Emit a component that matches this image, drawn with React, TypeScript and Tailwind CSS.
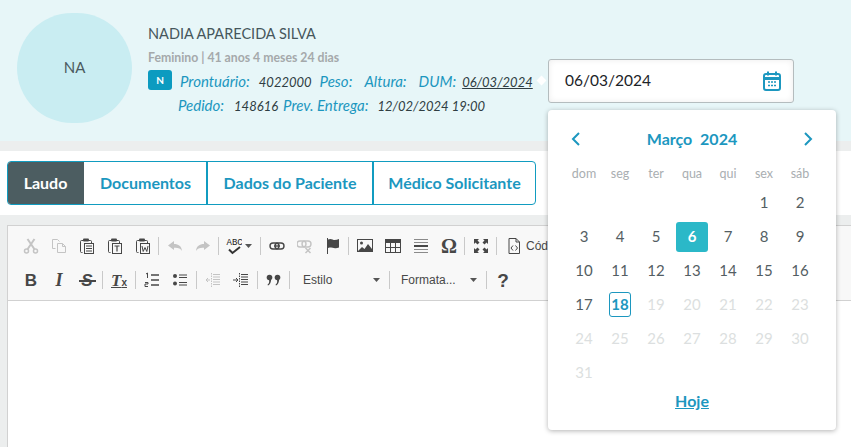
import React from "react";

const F = "[font-family:'Lato','Noto_Sans',sans-serif]";

function Sv({ children, w = 16, h = 16 }: { children: React.ReactNode; w?: number; h?: number }) {
  return (
    <svg width={w} height={h} viewBox={`0 0 ${w} ${h}`} fill="none">
      {children}
    </svg>
  );
}
const D = "#474747";
const L = "#c4c4c4";

const Scissors = () => (
  <Sv>
    <circle cx="3.500" cy="13" r="2" stroke={L} strokeWidth="1.500" />
    <circle cx="12.500" cy="13" r="2" stroke={L} strokeWidth="1.500" />
    <path d="M4.500 11.200 11.500 1M11.500 11.200 4.500 1" stroke={L} strokeWidth="2" />
  </Sv>
);
const CopyI = () => (
  <Sv>
    <path d="M1.500 1.500h5l2 2M1.500 1.500v9h3" stroke={L} />
    <path d="M6.500 5.500h5l3 3v6h-8z" stroke={L} />
    <path d="M11.500 5.500v3h3" stroke={L} />
  </Sv>
);
const Clip = ({ children }: { children: React.ReactNode }) => (
  <Sv>
    <path d="M3.500 14.500h-1a1 1 0 0 1-1-1v-10a1 1 0 0 1 1-1h2" stroke={D} />
    <path d="M9.500 2.500h2a1 1 0 0 1 1 1v1.500" stroke={D} />
    <rect x="4" y="0.500" width="6" height="3" rx="1" fill={D} />
    <rect x="5.500" y="5.500" width="9" height="10" fill="#f8f8f8" stroke={D} />
    {children}
  </Sv>
);
const Paste = () => (
  <Clip>
    <path d="M7 8h6M7 10.500h6M7 13h6" stroke={D} />
  </Clip>
);
const PasteT = () => (
  <Clip>
    <path d="M7.500 8h5M10 8v5.500" stroke={D} strokeWidth="1.200" />
  </Clip>
);
const PasteW = () => (
  <Clip>
    <path d="M7 8l1.200 5.500L10 9.500l1.800 4L13 8" stroke={D} />
  </Clip>
);
const Undo = ({ flip }: { flip?: boolean }) => (
  <Sv>
    <g transform={flip ? "translate(16 0) scale(-1 1)" : undefined}>
      <path d="M1 7.500 7 3v3c4.500 0 7.500 2 8 7-1.500-2.500-4-3.500-8-3.200V12z" fill={L} />
    </g>
  </Sv>
);
const Spell = () => (
  <svg width="16" height="18" viewBox="0 0 16 18" fill="none">
    <text x="0.500" y="8" fontFamily="'Liberation Sans Narrow','Liberation Mono',monospace" fontSize="9" fill="#222">
      ABC
    </text>
    <path d="M3 12.500l3.500 3.500L14 10" stroke="#333" strokeWidth="2" />
  </svg>
);
const Caret = ({ c = "#555" }: { c?: string }) => (
  <svg width="7" height="4" viewBox="0 0 7 4">
    <path d="M0 0h7L3.500 4z" fill={c} />
  </svg>
);
const LinkI = () => (
  <Sv>
    <rect x="1" y="5" width="9" height="6" rx="3" stroke={D} strokeWidth="1.400" />
    <rect x="6" y="5" width="9" height="6" rx="3" stroke={D} strokeWidth="1.400" />
    <path d="M5 8h6" stroke={D} strokeWidth="1.400" />
  </Sv>
);
const Unlink = () => (
  <Sv>
    <rect x="0" y="3" width="9" height="6" rx="3" stroke={L} strokeWidth="1.400" />
    <rect x="5" y="3" width="9" height="6" rx="3" stroke={L} strokeWidth="1.400" />
    <path d="M8.500 10l5 5M13.500 10l-5 5" stroke={L} strokeWidth="1.500" />
  </Sv>
);
const Flag = () => (
  <Sv>
    <path d="M2.500 0v16" stroke={D} />
    <path d="M3 1.500c3-1.500 5 .5 6.500.5S12.500 1.500 14 1v8.500c-2 .8-3.500 1-5 .5s-3.500-.8-6 0z" fill={D} />
  </Sv>
);
const Img = () => (
  <Sv>
    <rect x="0.500" y="1.500" width="15" height="12" fill="#f8f8f8" stroke={D} />
    <circle cx="4.500" cy="5" r="1.500" fill={D} />
    <path d="M1 13l4-4 2.500 2 3.500-5 4 5v2z" fill={D} />
  </Sv>
);
const Tbl = () => (
  <Sv>
    <rect x="0.500" y="1.500" width="15" height="13" stroke={D} />
    <path d="M1 2h14v3H1z" fill={D} />
    <path d="M5.500 5v9M10.500 5v9M1 9.500h14" stroke={D} />
  </Sv>
);
const Hr = () => (
  <Sv>
    <path d="M1 1.500h14M1 4.500h14M1 11.500h14M1 14.500h14" stroke="#8a8a8a" />
    <path d="M1 8h14" stroke={D} strokeWidth="2" />
  </Sv>
);
const Max = () => (
  <Sv>
    <path d="M1 1h5L4.500 2.500 6.500 4.500 4.500 6.500 2.500 4.500 1 6zM15 1v5l-1.500-1.500-2 2-2-2 2-2L10 1zM1 15v-5l1.500 1.500 2-2 2 2-2 2L6 15zM15 15h-5l1.500-1.500-2-2 2-2 2 2L15 10z" fill={D} />
  </Sv>
);
const Src = () => (
  <Sv>
    <path d="M3 .500h7l3.500 3.500v11.500H3z" stroke={D} />
    <path d="M10 .500v3.500h3.500" stroke={D} />
    <path d="M7 7.500 5 10l2 2.500M9.500 7.500l2 2.500-2 2.500" stroke={D} />
  </Sv>
);
const Ol = () => (
  <Sv>
    <path d="M7 3h8M7 8h8M7 13h8" stroke={D} strokeWidth="1.300" />
    <path d="M2 2l1.500-1v5M1 10.500h3V12H1v2.500h3" stroke={D} />
  </Sv>
);
const Ul = () => (
  <Sv>
    <circle cx="3" cy="4" r="2" fill={D} />
    <circle cx="3" cy="11.500" r="2" fill={D} />
    <path d="M7 3h8M7 5.500h8M7 10.500h8M7 13h8" stroke={D} />
  </Sv>
);
const Indent = ({ c, flip }: { c: string; flip?: boolean }) => (
  <Sv>
    <path d="M6.500 1v14" stroke={c} strokeDasharray="1.500 1" />
    <path d="M8 2.500h7M8 5h7M8 7.500h7M8 10h7M8 12.500h7" stroke={c} />
    {flip ? <path d="M5 8H1M3 6 1 8l2 2" stroke={c} /> : <path d="M0 8h4.500M3 6l2 2-2 2" stroke={c} />}
  </Sv>
);

function Btn({ children, w = 28 }: { children: React.ReactNode; w?: number }) {
  return (
    <div className="h-[28px] flex items-center justify-center shrink-0" style={{ width: w }}>
      {children}
    </div>
  );
}
const Sep = () => <div className="w-px h-[18px] bg-[#c9c9c9] ml-[1px] mr-[2px] shrink-0" />;
const SepW = () => <div className="w-px h-[18px] bg-[#c9c9c9] ml-[2px] mr-[2px] shrink-0" />;

function Toolbar() {
  return (
    <div className="bg-[#f8f8f8] border-b border-[#d1d1d1] h-[75px] pl-[9px] pt-[6px] flex flex-col gap-[6px] overflow-hidden">
      <div className="flex items-center h-[28px]">
        <Btn><Scissors /></Btn>
        <Btn><CopyI /></Btn>
        <Btn><Paste /></Btn>
        <Btn><PasteT /></Btn>
        <Btn><PasteW /></Btn>
        <Sep />
        <Btn><Undo /></Btn>
        <Btn><Undo flip /></Btn>
        <Sep />
        <div className="w-[38px] h-[28px] flex items-center pl-[5px] gap-[3px] shrink-0">
          <Spell />
          <Caret />
        </div>
        <Sep />
        <Btn><LinkI /></Btn>
        <Btn><Unlink /></Btn>
        <Btn><Flag /></Btn>
        <Sep />
        <Btn><Img /></Btn>
        <Btn><Tbl /></Btn>
        <Btn><Hr /></Btn>
        <Btn>
          <span className="font-['Liberation_Serif',serif] font-bold text-[20px] leading-none text-[#474747]">Ω</span>
        </Btn>
        <Sep />
        <Btn><Max /></Btn>
        <Sep />
        <div className="flex items-center gap-[4px] pl-[7px] shrink-0">
          <Src />
          <span className="font-['Liberation_Sans',sans-serif] text-[12px] text-[#474747]">Código</span>
        </div>
      </div>
      <div className="flex items-center h-[28px]">
        <Btn><span className="font-['Liberation_Sans',sans-serif] font-bold text-[17px] leading-none text-[#474747]">B</span></Btn>
        <Btn><span className="font-['Liberation_Serif',serif] font-bold italic text-[18px] leading-none text-[#474747]">I</span></Btn>
        <Btn>
          <span className="relative font-['Liberation_Sans',sans-serif] font-bold italic text-[17px] leading-none text-[#474747]">
            S
            <span className="absolute -left-[2px] -right-[3px] top-[8px] h-[2px] bg-[#474747]" />
          </span>
        </Btn>
        <Sep />
        <Btn>
          <span className="font-['Liberation_Serif',serif] font-bold italic text-[17px] leading-none text-[#474747] underline">
            T<span className="font-['Liberation_Sans',sans-serif] not-italic text-[10px]">x</span>
          </span>
        </Btn>
        <SepW />
        <Btn><Ol /></Btn>
        <Btn><Ul /></Btn>
        <SepW />
        <Btn><Indent c="#c4c4c4" flip /></Btn>
        <Btn><Indent c={D} /></Btn>
        <SepW />
        <Btn>
          <svg width="16" height="16" viewBox="0 0 16 16" fill={D}>
            <circle cx="3.500" cy="5.500" r="2.800" />
            <path d="M4.500 5.500c1.500 2.500 0 7-2.500 8l-.5-.8c1.500-1 2-3 1.500-5z" />
            <circle cx="11.500" cy="5.500" r="2.800" />
            <path d="M12.500 5.500c1.500 2.500 0 7-2.500 8l-.5-.8c1.500-1 2-3 1.500-5z" />
          </svg>
        </Btn>
        <Sep />
        <div className="w-[96px] flex items-center justify-between pl-[11px] pr-[8px] shrink-0">
          <span className="font-['Liberation_Sans',sans-serif] text-[12px] text-[#484848]">Estilo</span>
          <Caret />
        </div>
        <Sep />
        <div className="w-[93px] flex items-center justify-between pl-[9px] pr-[8px] shrink-0">
          <span className="font-['Liberation_Sans',sans-serif] text-[12px] text-[#484848]">Formata...</span>
          <Caret />
        </div>
        <Sep />
        <Btn><span className="font-['Liberation_Sans',sans-serif] font-bold text-[19px] leading-none text-[#474747]">?</span></Btn>
      </div>
    </div>
  );
}

const weeks: (number | null)[][] = [
  [null, null, null, null, null, 1, 2],
  [3, 4, 5, 6, 7, 8, 9],
  [10, 11, 12, 13, 14, 15, 16],
  [17, 18, 19, 20, 21, 22, 23],
  [24, 25, 26, 27, 28, 29, 30],
  [31, null, null, null, null, null, null],
];

function Calendar() {
  return (
    <div className={`absolute left-[548px] top-[110px] w-[288px] h-[320px] bg-white rounded-[4px] shadow-[0_1px_5px_rgba(0,0,0,0.3)] ${F} flex flex-col`}>
      <div className="h-[58px] flex items-center justify-between px-[21px] text-[#1c97bf]">
        <svg width="14" height="16" viewBox="0 0 14 16" fill="none">
          <path d="M10 2 4 8l6 6" stroke="#1c97bf" strokeWidth="2" />
        </svg>
        <span className="text-[16px] font-bold whitespace-pre">Março  2024</span>
        <svg width="14" height="16" viewBox="0 0 14 16" fill="none">
          <path d="M4 2l6 6-6 6" stroke="#1c97bf" strokeWidth="2" />
        </svg>
      </div>
      <div className="px-[18px]">
        <div className="grid grid-cols-7 h-[10px] items-center text-center text-[12.500px] -mt-[3px] text-[#a9aeb1]">
          {["dom", "seg", "ter", "qua", "qui", "sex", "sáb"].map((d) => (
            <div key={d}>{d}</div>
          ))}
        </div>
        <div className="mt-[10px] flex flex-col">
          {weeks.map((w, i) => (
            <div key={i} className="grid grid-cols-7 h-[34px] items-center justify-items-center text-[15px]">
              {w.map((d, j) => {
                if (d == null) return <div key={j} />;
                if (d === 6)
                  return (
                    <div key={j} className="w-[32px] h-[30px] mt-[2px] rounded-[3px] bg-[#2bb8c8] text-white font-bold flex items-center justify-center pb-[1px]">
                      {d}
                    </div>
                  );
                if (d === 18)
                  return (
                    <div key={j} className="w-[22px] h-[25px] rounded-[3px] border border-[#1c97bf] text-[#1c97bf] font-bold flex items-center justify-center">
                      {d}
                    </div>
                  );
                return (
                  <div key={j} className={d > 18 ? "text-[#dcdfe0]" : "text-[#545e63]"}>
                    {d}
                  </div>
                );
              })}
            </div>
          ))}
        </div>
      </div>
      <div className="text-center">
        <span className="text-[16px] font-bold text-[#1c97bf] underline">Hoje</span>
      </div>
    </div>
  );
}

const label = "text-[15px] text-[#1c97bf]";
const value = "text-[13px] text-[#2f3d42]";

export default function App() {
  return (
    <div className={`relative w-[851px] h-[447px] overflow-hidden bg-white ${F}`}>
      <header className="h-[141px] bg-[#e7f6f8] flex">
        <div className="ml-[17px] mt-[13px] w-[115px] h-[110px] rounded-full bg-[#c9edf2] flex items-center justify-center pb-[2px] text-[15px] text-[#4b5a60] shrink-0">
          NA
        </div>
        <div className="ml-[16px] pt-[24px] w-[400px] shrink-0">
          <div className="text-[14.500px] leading-[19px] text-[#46565c] whitespace-nowrap">NADIA APARECIDA SILVA</div>
          <div className="mt-[7px] text-[12.250px] leading-[15px] font-bold text-[#a5a9ab] whitespace-nowrap">Feminino | 41 anos 4 meses 24 dias</div>
          <div className="mt-[5px] flex items-baseline h-[20px] italic whitespace-nowrap">
            <span className="w-[24px] h-[20px] self-center rounded-[3px] bg-[#0c9bc0] text-white text-[10px] font-bold not-italic flex items-center justify-center">N</span>
            <span className={`ml-[8px] ${label}`}>Prontuário:</span>
            <span className={`ml-[9px] ${value}`}>4022000</span>
            <span className={`ml-[8px] ${label}`}>Peso:</span>
            <span className={`ml-[12px] ${label}`}>Altura:</span>
            <span className={`ml-[12px] ${label}`}>DUM:</span>
            <span className={`ml-[6px] ${value} underline`}>06/03/2024</span>
            <span className="ml-[5px] w-[7px] h-[7px] self-center rotate-45 bg-white not-italic" />
          </div>
          <div className="mt-[4px] ml-[30px] flex items-baseline h-[20px] italic whitespace-nowrap">
            <span className={label}>Pedido:</span>
            <span className={`ml-[10px] ${value}`}>148616</span>
            <span className={`ml-[5px] ${label}`}>Prev. Entrega:</span>
            <span className={`ml-[9px] ${value}`}>12/02/2024 19:00</span>
          </div>
        </div>
        <div className="mt-[59px] w-[246px] h-[44px] rounded-[3px] border border-[#b4bcbe] bg-white shadow-[inset_0_0_6px_rgba(0,0,0,0.08)] flex items-center justify-between pl-[16px] pr-[12px] shrink-0">
          <span className="text-[15.500px] text-[#1c2328]">06/03/2024</span>
          <svg width="18" height="20" viewBox="0 0 18 20" fill="none">
            <rect x="1" y="3" width="16" height="16" rx="2" stroke="#1c97bf" strokeWidth="2" />
            <path d="M1 7.500h16" stroke="#1c97bf" strokeWidth="3" />
            <path d="M5 .500v4M13 .500v4" stroke="#1c97bf" strokeWidth="2" />
            <path d="M5 11h2M8 11h2M11 11h2M5 14.500h2M8 14.500h2M11 14.500h2" stroke="#1c97bf" strokeWidth="1.600" />
          </svg>
        </div>
      </header>
      <div className="h-[10px] bg-[#eceeee]" />
      <div className="h-[64px] pt-[10px] pl-[7px]">
        <div className="flex h-[44px] w-[529px] rounded-[4px] border border-[#119cc0] text-[16px] font-bold text-[#1c97bf] overflow-hidden">
          <div className="w-[77px] -ml-px -my-px bg-[#4c5d61] text-white flex items-center justify-center rounded-l-[4px]">Laudo</div>
          <div className="w-[123px] flex items-center justify-center border-r-2 border-[#119cc0] ml-px">Documentos</div>
          <div className="w-[166px] flex items-center justify-center border-r-2 border-[#119cc0]">Dados do Paciente</div>
          <div className="flex-1 flex items-center justify-center">Médico Solicitante</div>
        </div>
      </div>
      <div className="bg-[#eceeee] pt-[10px] pl-[7px] h-[232px]">
        <div className="h-full bg-white border-t border-l border-[#d1d1d1]">
          <Toolbar />
        </div>
      </div>
      <Calendar />
    </div>
  );
}
